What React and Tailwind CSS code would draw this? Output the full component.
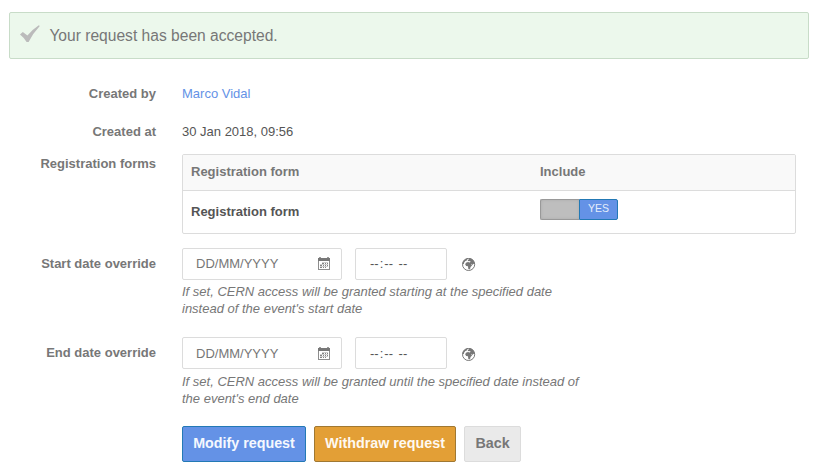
import React from 'react';

function CheckIcon() {
  return (
    <svg width="20" height="18" viewBox="0 0 20 18" fill="#bbb">
      <path d="M0 9.4 2.8 6.9 7.4 10.6Q12.6 4.2 18.8 .2L19.8 .9Q13 8 8.6 17H6.6Q4.4 12.8 0 9.4z" />
    </svg>
  );
}

function CalendarIcon() {
  return (
    <svg width="12" height="14" viewBox="0 0 12 14" fill="#777" shapeRendering="crispEdges">
      <path d="M0 1h12v3H0z" />
      <path d="M1 0h2v1H1zM9 0h2v1H9z" fill="#999" />
      <path d="M0 4h1v8h10V4h1v9H0z" fill="#8d8d8d" />
      <path
        fill="#858585"
        d="M4 6h2v1H4zM7 6h1v1H7zM9 6h1v1H9zM2 8h2v1H2zM5 8h1v1H5zM7 8h1v1H7zM9 8h1v1H9zM2 10h2v1H2zM5 10h1v1H5zM7 10h1v1H7z"
      />
      <path
        fill="#cfcfcf"
        d="M4 5h6v1H4zM2 7h8v1H2zM2 9h8v1H2z"
      />
    </svg>
  );
}

function GlobeIcon() {
  return (
    <svg width="14" height="14" viewBox="0.4 0.6 14 14" fill="#777">
      <circle cx="7" cy="7" r="6.1" fill="none" stroke="#777" strokeWidth="1" />
      <path d="M1 7Q1 3 4.6 1.3L6 1.7 5.2 3 3.8 3.6 2.6 5 2.2 6.6z" />
      <path d="M6.6 1Q10.5 .6 12.4 4L13 6.8 11.7 6.4 11.2 7.8 10.2 6.3 9.8 7.4 10.5 8.2 8.9 9.7 8.7 11.2 7.5 12.2 6.7 11.6 6.4 8.9 4.6 8.5 3.6 7.2 4.3 5.3 6.4 4.7 8.2 5.1 9.1 4.2 7.4 3.6 6.2 3.9 6.3 2.6 7.3 2.2z" />
    </svg>
  );
}

function Row({ label, className, labelClass = '', children }) {
  return (
    <div className={`flex gap-[26px] ${className}`}>
      <div className={`w-[156px] shrink-0 text-right font-bold text-[#777] ${labelClass}`}>{label}</div>
      <div className="min-w-0">{children}</div>
    </div>
  );
}

function DateTime({ textPad, hintClass, lines }) {
  return (
    <>
      <div className="flex h-8 text-[#777]">
        <div className={`flex w-40 justify-between rounded-[2px] border border-[#dcdcdc] pl-[13px] pr-[11px] ${textPad}`}>
          <span>DD/MM/YYYY</span>
          <span className="pt-[2px]"><CalendarIcon /></span>
        </div>
        <div className={`ml-[13px] flex w-[92px] rounded-[2px] border border-[#dcdcdc] pl-[13px] text-[#555] ${textPad}`}>
          <span className="px-px">--</span>
          <span>:</span>
          <span className="px-px">--</span>
          <span className="whitespace-pre"> </span>
          <span className="px-px">--</span>
        </div>
        <div className={`ml-[15px] ${textPad}`}>
          <span className="block pt-[4px]"><GlobeIcon /></span>
        </div>
      </div>
      <p className={`italic text-[#777] ${hintClass}`}>
        {lines[0]}
        <br />
        {lines[1]}
      </p>
    </>
  );
}

export default function App() {
  return (
    <div className="h-[474px] w-[819px] overflow-hidden bg-white pt-3 font-['Liberation_Sans',Arial,sans-serif] text-[13px] leading-[17px] text-[#555]">
      <div className="ml-[9px] flex h-[47px] w-[800px] items-center rounded-[2px] border border-[#c8dcc8] bg-[#ecf8ec] pl-[10px] text-[15.6px] text-[#777]">
        <span className="mb-[3px]"><CheckIcon /></span>
        <span className="ml-[9.4px]">Your request has been accepted.</span>
      </div>

      <Row label="Created by" className="mt-[26px] h-[38px]">
        <a className="text-[#6492e6]">Marco Vidal</a>
      </Row>
      <Row label="Created at" className="h-[31px]">30 Jan 2018, 09:56</Row>
      <Row label="Registration forms" labelClass="pt-px" className="h-[94px]">
        <div className="h-20 w-[614px] overflow-hidden rounded-[2px] border border-[#dcdcdc] font-bold">
          <div className="grid h-[36px] grid-cols-[349px_1fr] border-b border-[#dcdcdc] bg-[#f9f9f9] pl-2 pt-2 text-[#777]">
            <span>Registration form</span>
            <span>Include</span>
          </div>
          <div className="grid grid-cols-[349px_1fr] pl-2 pt-2">
            <span className="pt-1">Registration form</span>
            <div className="flex h-[21px] w-[78px] text-[10.5px] font-normal">
              <div className="w-[39px] rounded-l-[2px] border border-r-0 border-[#999] bg-[#bebebe] shadow-[inset_0_0_3px_#aaa]" />
              <div className="w-[39px] rounded-r-[2px] border border-[#2379b5] bg-[#6492e6] text-center leading-[17px] text-[#e5edfb]">YES</div>
            </div>
          </div>
        </div>
      </Row>
      <Row label="Start date override" labelClass="pt-[7px]" className="h-[89px]">
        <DateTime
          textPad="pt-[6px]"
          hintClass="mt-[3px]"
          lines={['If set, CERN access will be granted starting at the specified date', "instead of the event's start date"]}
        />
      </Row>
      <Row label="End date override" labelClass="pt-[7px]" className="h-[89px]">
        <DateTime
          textPad="pt-[7px]"
          hintClass="mt-[4px]"
          lines={['If set, CERN access will be granted until the specified date instead of', "the event's end date"]}
        />
      </Row>

      <div className="ml-[182px] flex h-9 gap-2 text-[14.3px] font-bold">
        <button className="w-[124px] rounded-[2px] border border-[#2379b5] bg-[#6492e6] pb-[2px] text-[#f5f8fe]">Modify request</button>
        <button className="w-[142px] rounded-[2px] border border-[#a07832] bg-[#e39f36] pb-[2px] text-[#fef9f1]">Withdraw request</button>
        <button className="w-[57px] rounded-[2px] border border-[#dcdcdc] bg-[#eaeaea] pb-[2px] text-[#777]">Back</button>
      </div>
    </div>
  );
}
